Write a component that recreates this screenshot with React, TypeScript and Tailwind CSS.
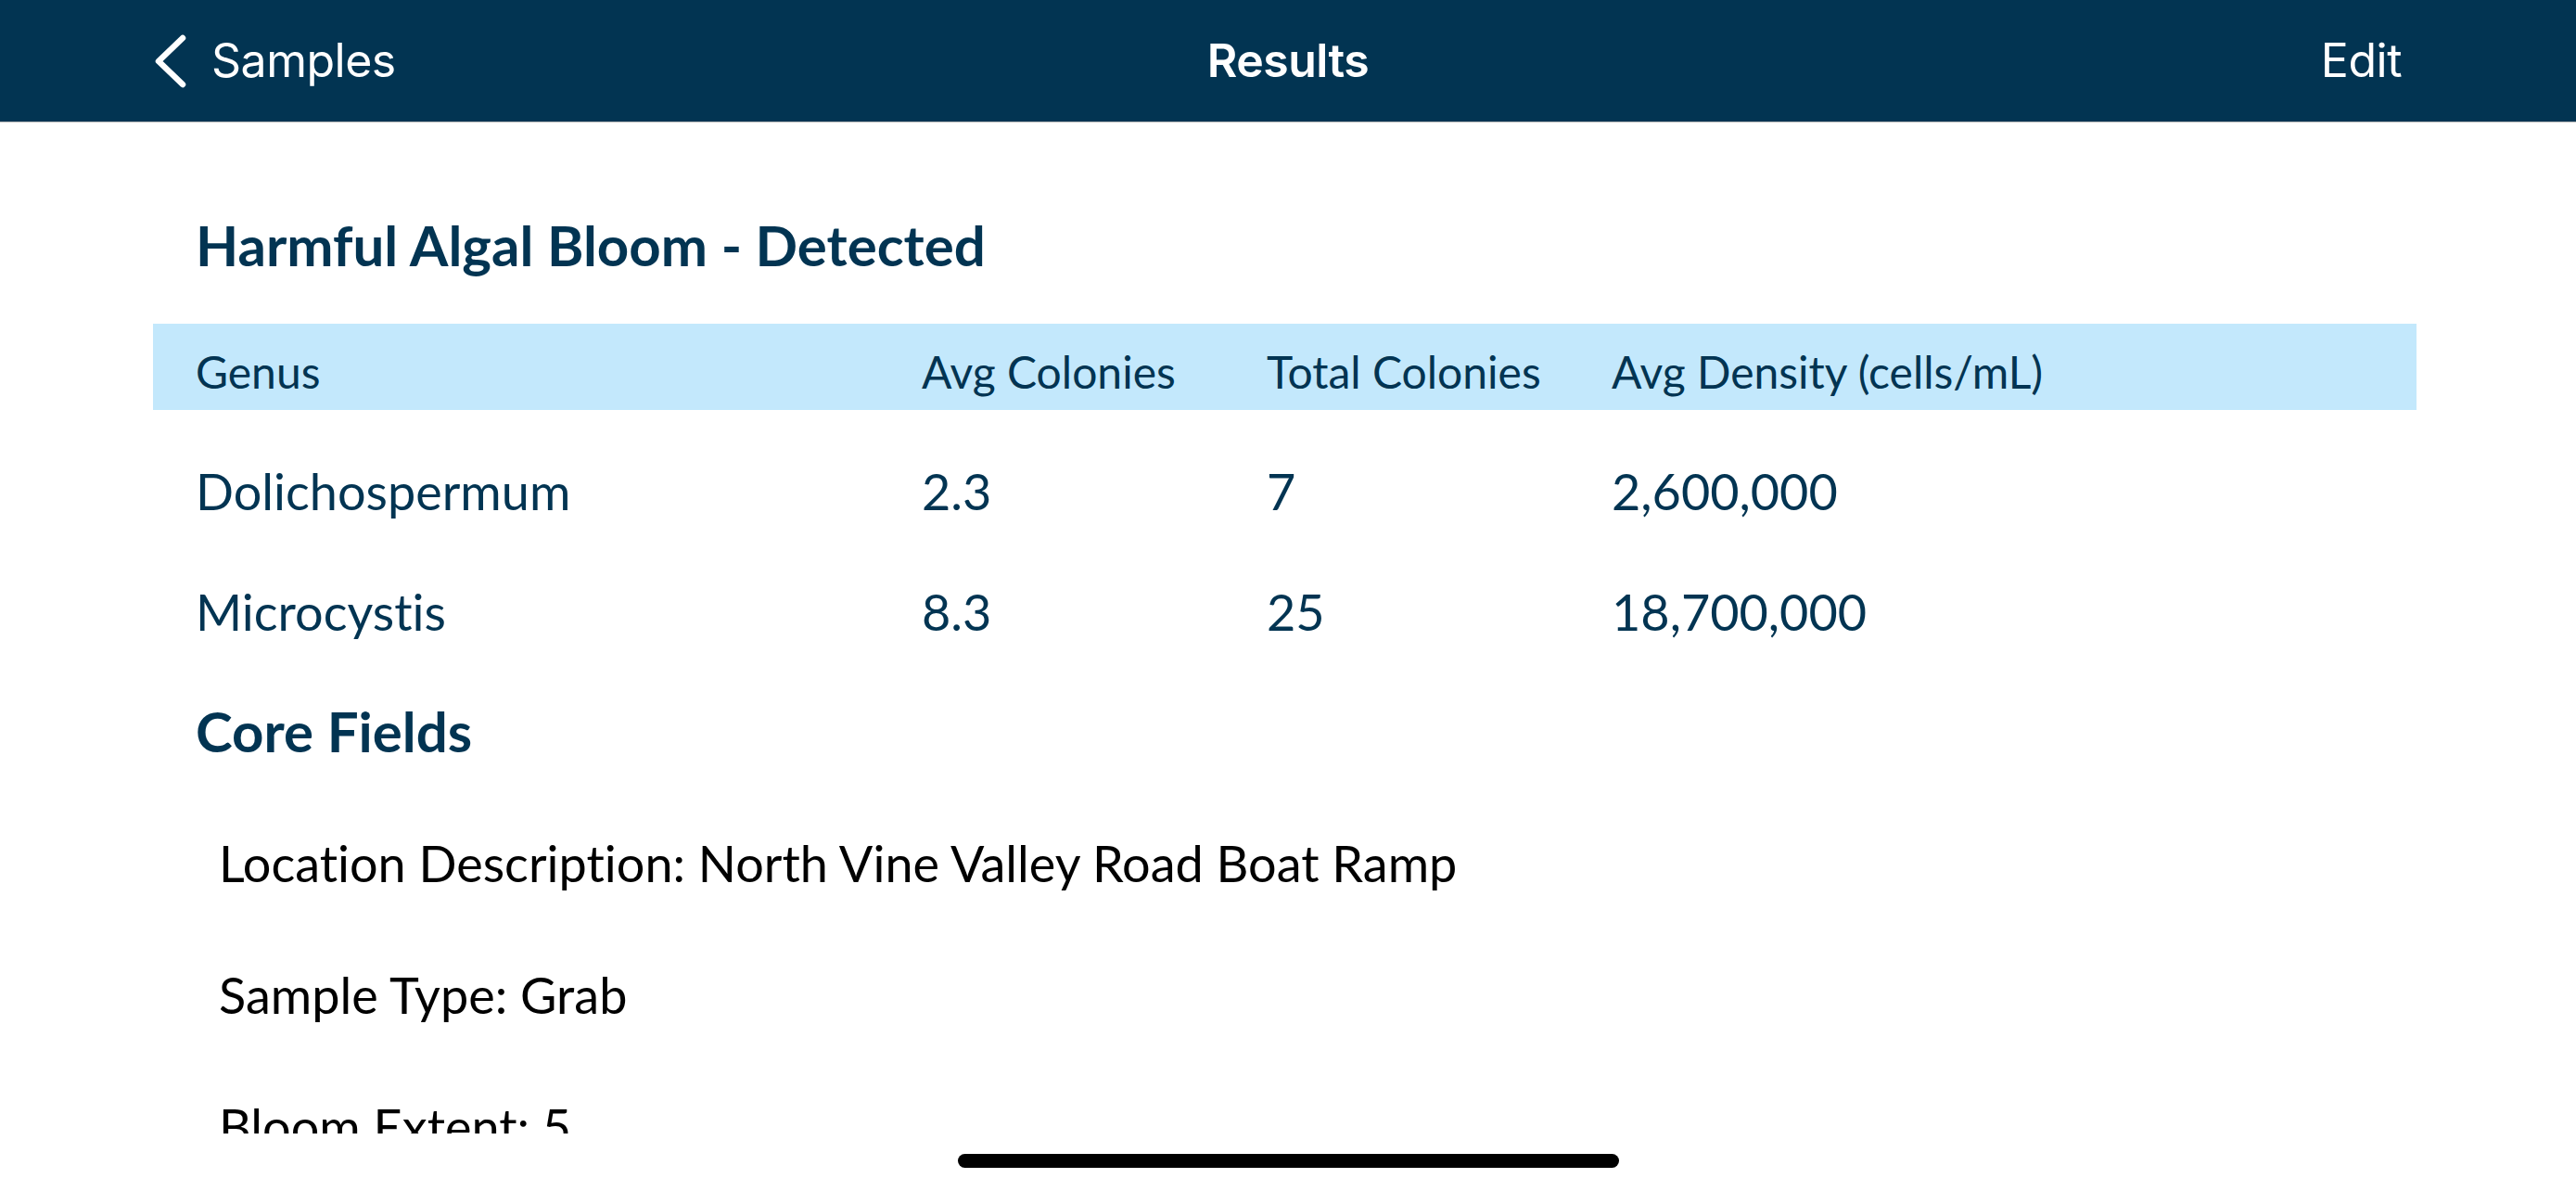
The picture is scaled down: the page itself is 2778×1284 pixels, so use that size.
import React from "react";

const rows = [
  { genus: "Dolichospermum", avg: "2.3", total: "7", density: "2,600,000" },
  { genus: "Microcystis", avg: "8.3", total: "25", density: "18,700,000" },
];

const fields = [
  "Location Description: North Vine Valley Road Boat Ramp",
  "Sample Type: Grab",
  "Bloom Extent: 5",
];

export default function App() {
  return (
    <div
      className="w-[2778px] h-[1284px] bg-white flex flex-col overflow-hidden [font-variant-ligatures:none]"
      style={{ fontFamily: "Lato, 'Open Sans', sans-serif" }}
    >
      <header
        className="h-[132px] shrink-0 bg-[#023452] border-b border-[#b4b4b4] grid grid-cols-[1fr_auto_1fr] items-center px-[166px] text-white"
        style={{ fontFamily: "Inter, 'Noto Sans', sans-serif" }}
      >
        <div className="flex items-center gap-[26px]">
          <svg width="36" height="58" viewBox="0 0 36 58" fill="none">
            <path
              d="M31 4 L5 29 L31 54"
              stroke="white"
              strokeWidth="6.5"
              strokeLinecap="round"
              strokeLinejoin="round"
            />
          </svg>
          <span className="text-[50px] tracking-[-0.01em]">Samples</span>
        </div>
        <div className="text-[50px] font-semibold tracking-[-0.01em]">Results</div>
        <div className="flex justify-end pr-[22px]">
          <span className="text-[50px] tracking-[-0.01em]">Edit</span>
        </div>
      </header>

      <main className="h-[1090px] shrink-0 overflow-hidden text-[#023452]">
        <h1 className="pt-[96px] pl-[211px] text-[60px] leading-[1.2] font-bold">
          Harmful Algal Bloom - Detected
        </h1>

        <div className="ml-[165px] w-[2441px] mt-[49px]">
          <div className="h-[93px] pt-[10px] bg-[#c3e8fc] grid grid-cols-[783px_372px_372px_1fr] items-center pl-[46px] text-[48px] leading-[1.2]">
            <div>Genus</div>
            <div>Avg Colonies</div>
            <div>Total Colonies</div>
            <div>Avg Density (cells/mL)</div>
          </div>
          <div className="mt-[23px]">
            {rows.map((r) => (
              <div
                key={r.genus}
                className="h-[130px] grid grid-cols-[783px_372px_372px_1fr] items-center pl-[46px] text-[54px] leading-[1.2]"
              >
                <div>{r.genus}</div>
                <div>{r.avg}</div>
                <div>{r.total}</div>
                <div>{r.density}</div>
              </div>
            ))}
          </div>
        </div>

        <h2 className="mt-[27px] pl-[211px] text-[60px] leading-[1.2] font-bold">
          Core Fields
        </h2>

        <div className="mt-[74px] pl-[236px] flex flex-col gap-[77px] text-black text-[54px] leading-[65px]">
          {fields.map((f) => (
            <div key={f}>{f}</div>
          ))}
        </div>
      </main>

      <footer className="flex-1 flex justify-center pt-[22px]">
        <div className="w-[713px] h-[15px] rounded-full bg-black" />
      </footer>
    </div>
  );
}
